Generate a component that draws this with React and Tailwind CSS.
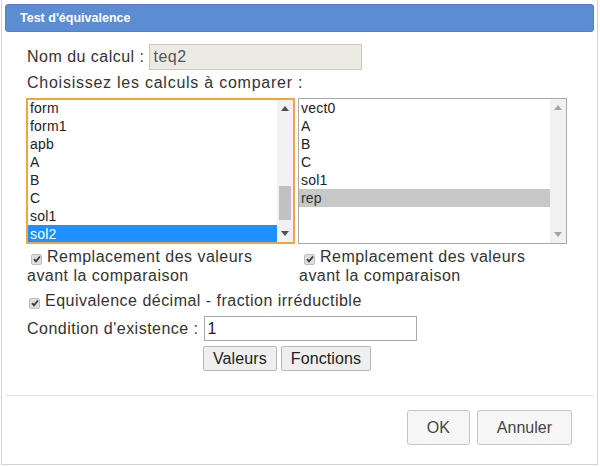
import React from 'react';

const leftItems = ['form', 'form1', 'apb', 'A', 'B', 'C', 'sol1', 'sol2'];
const rightItems = ['vect0', 'A', 'B', 'C', 'sol1', 'rep'];

const Arrow = ({ up, color }) => (
  <svg width="8" height="5" viewBox="0 0 8 5">
    <path d={up ? 'M0 5 L4 0 L8 5 Z' : 'M0 0 L4 5 L8 0 Z'} fill={color} />
  </svg>
);

const CheckMark = () => (
  <span className="inline-flex items-center justify-center w-[11px] h-[11px] rounded-[2px] bg-[#dedede] border border-[#bdbdbd] align-[-1px]">
    <svg width="8" height="8" viewBox="0 0 8 8">
      <path d="M1 4.2 L3 6.3 L7 1.5" stroke="#3a3a3a" strokeWidth="1.8" fill="none" />
    </svg>
  </span>
);

const ListBox = ({ items, selected, focused }) => {
  return (
    <div
      className={
        focused
          ? 'w-[269px] h-[146px] border-2 border-[#eba740] flex bg-white'
          : 'w-[269px] h-[146px] border border-[#a9a9a9] flex bg-white'
      }
    >
      <div className="flex-1 overflow-hidden text-[14px] leading-[18px] tracking-[0.2px]">
        <div className={focused ? '-mt-px' : ''}>
          {items.map((item) => (
            <div
              key={item}
              className={
                item === selected
                  ? focused
                    ? 'h-[18px] pl-[2px] bg-[#1e90ff] text-white'
                    : 'h-[18px] pl-[2px] bg-[#c8c8c8] text-[#333]'
                  : 'h-[18px] pl-[2px] text-[#222]'
              }
            >
              {item}
            </div>
          ))}
        </div>
      </div>
      <div className="w-[16px] bg-[#f1f1f1] flex flex-col">
        <div className="h-[17px] flex items-center justify-center">
          <Arrow up color={focused ? '#505050' : '#a3a3a3'} />
        </div>
        <div className="flex-1">
          {focused && <div className="mt-[69px] mx-[2px] h-[34px] bg-[#c1c1c1]" />}
        </div>
        <div className="h-[17px] flex items-center justify-center">
          <Arrow color={focused ? '#505050' : '#a3a3a3'} />
        </div>
      </div>
    </div>
  );
};

const SmallButton = ({ children }) => (
  <button className="h-[25px] px-[9px] border border-[#b8b8b8] bg-[#efefef] rounded-[2px] text-[16px] leading-[18px] tracking-[0.1px] text-[#222]">
    {children}
  </button>
);

const PaneButton = ({ children }) => (
  <button className="h-[35px] px-[19px] border border-[#c5c5c5] bg-[#f6f6f6] rounded-[3px] text-[16px] tracking-normal text-[#454545]">
    {children}
  </button>
);

export default function App() {
  return (
    <div className="w-[600px] h-[466px] bg-white font-['Liberation_Sans',Arial,sans-serif] text-[#333]">
      <div className="ml-px w-[597px] h-[465px] border border-t-0 border-[#d3d3d3] px-[3px] pt-[4px] flex flex-col">
        {/* title bar */}
        <div className="h-[28px] bg-[#5c8dd3] border border-[#4f80c8] rounded-[3px] flex items-center pl-[14px] text-white text-[12.5px] font-bold">
          Test d'équivalence
        </div>

        <div className="pl-[22px] text-[16px] tracking-[0.48px]">
          <div className="mt-[12px] flex items-center">
            <span>Nom du calcul :</span>
            <div className="ml-[5px] w-[213px] h-[26px] bg-[#ebebe4] border border-[#c9c9c2] pl-[3px] leading-[24px] text-[#555]">
              teq2
            </div>
          </div>
          <div className="mt-[3px] leading-[19px] tracking-[0.75px]">Choisissez les calculs à comparer :</div>

          <div className="mt-[6px] -ml-px flex gap-[3px]">
            <ListBox items={leftItems} selected="sol2" focused />
            <ListBox items={rightItems} selected="rep" />
          </div>

          <div className="mt-[3px] flex gap-[3px] leading-[19px]">
            <div className="w-[269px]">
              <span className="ml-[4px] mr-[5px]">
                <CheckMark />
              </span>
              Remplacement des valeurs avant la comparaison
            </div>
            <div className="w-[269px]">
              <span className="ml-[5px] mr-[5px]">
                <CheckMark />
              </span>
              Remplacement des valeurs avant la comparaison
            </div>
          </div>

          <div className="mt-[6px] leading-[19px]">
            <span className="ml-[2px] mr-[5px]">
              <CheckMark />
            </span>
            Equivalence décimal - fraction irréductible
          </div>

          <div className="mt-[6px] flex items-center">
            <span>Condition d'existence :</span>
            <div className="ml-[5px] w-[213px] h-[25px] bg-white border border-[#a9a9a9] pl-[3px] leading-[23px] text-[#222]">
              1
            </div>
          </div>

          <div className="mt-[5px] ml-[176px] flex gap-[4px]">
            <SmallButton>Valeurs</SmallButton>
            <SmallButton>Fonctions</SmallButton>
          </div>
        </div>

        {/* button pane */}
        <div className="mt-auto border-t border-[#e4e4e4] pt-[14px] pb-[19px] pr-[22px] flex justify-end gap-[7px]">
          <PaneButton>OK</PaneButton>
          <PaneButton>Annuler</PaneButton>
        </div>
      </div>
    </div>
  );
}
